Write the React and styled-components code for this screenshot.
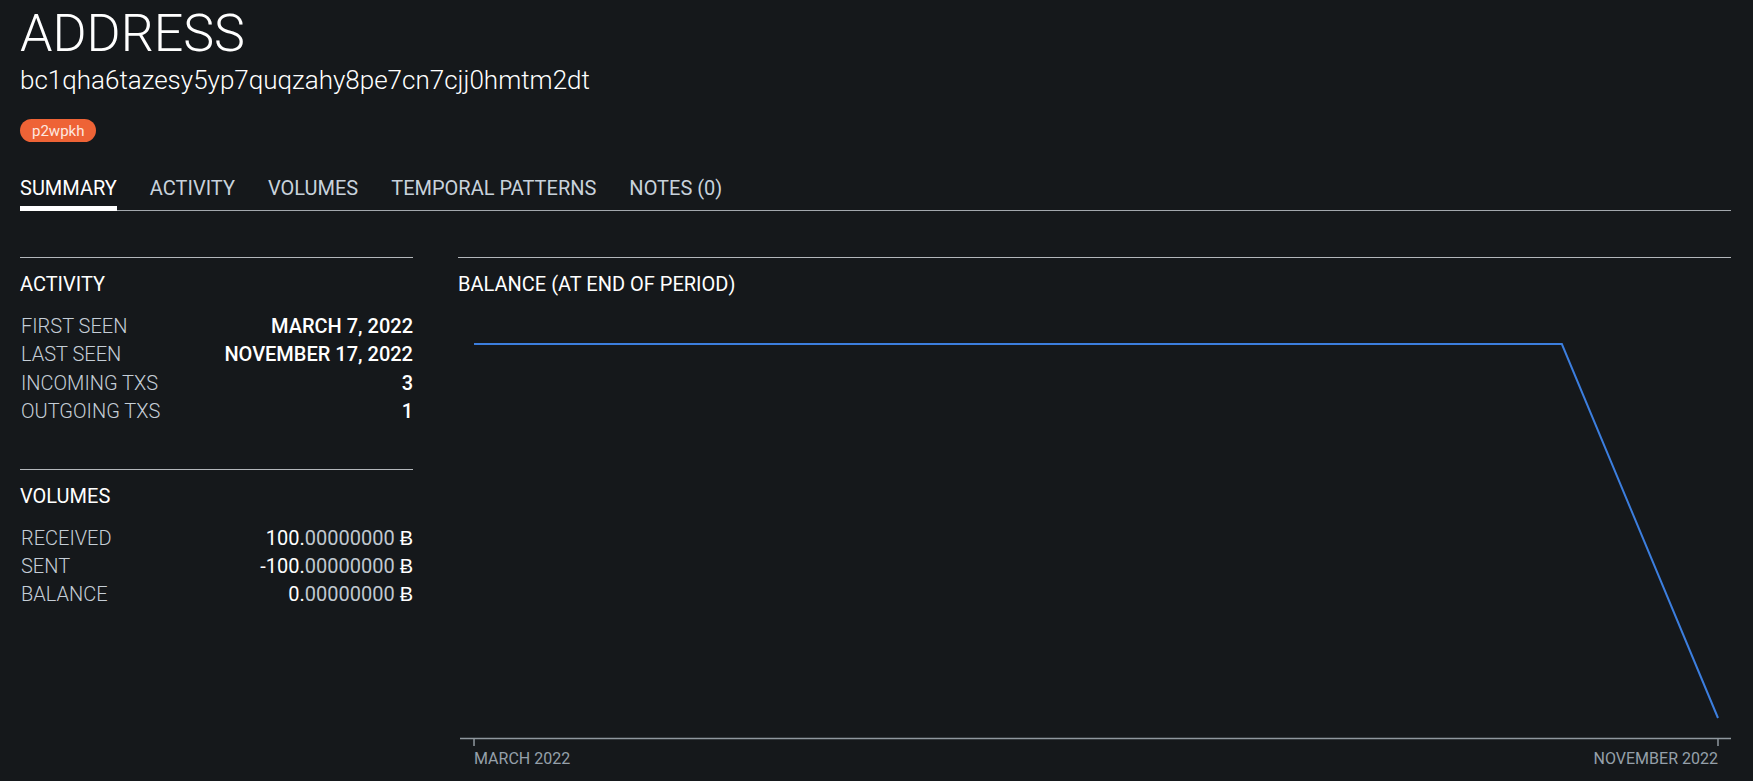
import React from 'react';
import styled, { createGlobalStyle } from 'styled-components';

const GlobalStyle = createGlobalStyle`
  html, body {
    margin: 0;
    padding: 0;
    background: #15181b;
    font-family: Roboto, "Liberation Sans", sans-serif;
    color: #ffffff;
  }
`;

const Page = styled.div`
  padding: 4px 22px 0 20px;
  min-height: 777px;
`;

const Title = styled.h1`
  margin: 0;
  font-size: 52px;
  font-weight: 300;
  line-height: 60px;
`;

const Hash = styled.div`
  font-size: 26px;
  font-weight: 300;
  line-height: 32px;
`;

const Badge = styled.span`
  display: inline-flex;
  align-items: center;
  height: 23px;
  margin-top: 23px;
  padding: 0 12px;
  border-radius: 12px;
  background: #ee6336;
  color: #fde8e0;
  font-size: 15px;
`;

const TabBar = styled.nav`
  display: flex;
  gap: 33px;
  margin-top: 34px;
  border-bottom: 1px solid #a3a8ad;
`;

const Tab = styled.div`
  font-size: 20px;
  line-height: 24px;
  padding-bottom: 6px;
  margin-bottom: -1px;
  border-bottom: 5px solid ${p => (p.$active ? '#ffffff' : 'transparent')};
  color: ${p => (p.$active ? '#ffffff' : '#c8d2dc')};
`;

const Columns = styled.div`
  display: grid;
  grid-template-columns: 393px 1fr;
  gap: 45px;
  margin-top: 46px;
`;

const Side = styled.div`
  display: flex;
  flex-direction: column;
  gap: 43px;
`;

const Section = styled.section`
  border-top: 1px solid #b3b7bb;
  padding-top: 14px;
`;

const Heading = styled.h2`
  margin: 0;
  font-size: 20px;
  font-weight: 400;
  line-height: 24px;
`;

const Rows = styled.div`
  margin-top: 16px;
  padding-left: 1px;
`;

const Row = styled.div`
  display: flex;
  justify-content: space-between;
  font-size: 20px;
  line-height: 28.4px;
`;

const Label = styled.span`
  font-weight: 300;
  color: #c5ced7;
`;

const Value = styled.span`
  font-weight: ${p => p.$weight || 500};
  color: #ffffff;
`;

const Decimals = styled.span`
  color: #c0c8d0;
`;

const Chart = styled.svg`
  display: block;
  width: 100%;
  height: 480px;
  margin-top: 3px;
  overflow: visible;
`;

function Amount({ whole, decimals }) {
  return (
    <Value $weight={400}>
      {whole}.<Decimals>{decimals}</Decimals> Ƀ
    </Value>
  );
}

function BalanceChart() {
  return (
    <Chart viewBox="0 0 1272 480" preserveAspectRatio="none">
      <line x1="2" y1="439.5" x2="1272" y2="439.5" stroke="#8f979e" strokeWidth="1.5" />
      <line x1="16" y1="439.5" x2="16" y2="447" stroke="#8f979e" strokeWidth="1.5" />
      <line x1="1259" y1="439.5" x2="1259" y2="447" stroke="#8f979e" strokeWidth="1.5" />
      <polyline
        points="16,45 1103,45 1259,419"
        fill="none"
        stroke="#3c7ede"
        strokeWidth="2"
      />
      <text x="16" y="465" fill="#95a0aa" fontSize="16" fontFamily="Roboto, sans-serif">
        MARCH 2022
      </text>
      <text x="1259" y="465" fill="#95a0aa" fontSize="16" textAnchor="end" fontFamily="Roboto, sans-serif">
        NOVEMBER 2022
      </text>
    </Chart>
  );
}

export default function App() {
  return (
    <>
      <GlobalStyle />
      <Page>
        <Title>ADDRESS</Title>
        <Hash>bc1qha6tazesy5yp7quqzahy8pe7cn7cjj0hmtm2dt</Hash>
        <Badge>p2wpkh</Badge>
        <TabBar>
          <Tab $active>SUMMARY</Tab>
          <Tab>ACTIVITY</Tab>
          <Tab>VOLUMES</Tab>
          <Tab>TEMPORAL PATTERNS</Tab>
          <Tab>NOTES (0)</Tab>
        </TabBar>
        <Columns>
          <Side>
            <Section>
              <Heading>ACTIVITY</Heading>
              <Rows>
                <Row><Label>FIRST SEEN</Label><Value>MARCH 7, 2022</Value></Row>
                <Row><Label>LAST SEEN</Label><Value>NOVEMBER 17, 2022</Value></Row>
                <Row><Label>INCOMING TXS</Label><Value>3</Value></Row>
                <Row><Label>OUTGOING TXS</Label><Value>1</Value></Row>
              </Rows>
            </Section>
            <Section>
              <Heading>VOLUMES</Heading>
              <Rows>
                <Row><Label>RECEIVED</Label><Amount whole="100" decimals="00000000" /></Row>
                <Row><Label>SENT</Label><Amount whole="-100" decimals="00000000" /></Row>
                <Row><Label>BALANCE</Label><Amount whole="0" decimals="00000000" /></Row>
              </Rows>
            </Section>
          </Side>
          <Section>
            <Heading>BALANCE (AT END OF PERIOD)</Heading>
            <BalanceChart />
          </Section>
        </Columns>
      </Page>
    </>
  );
}
